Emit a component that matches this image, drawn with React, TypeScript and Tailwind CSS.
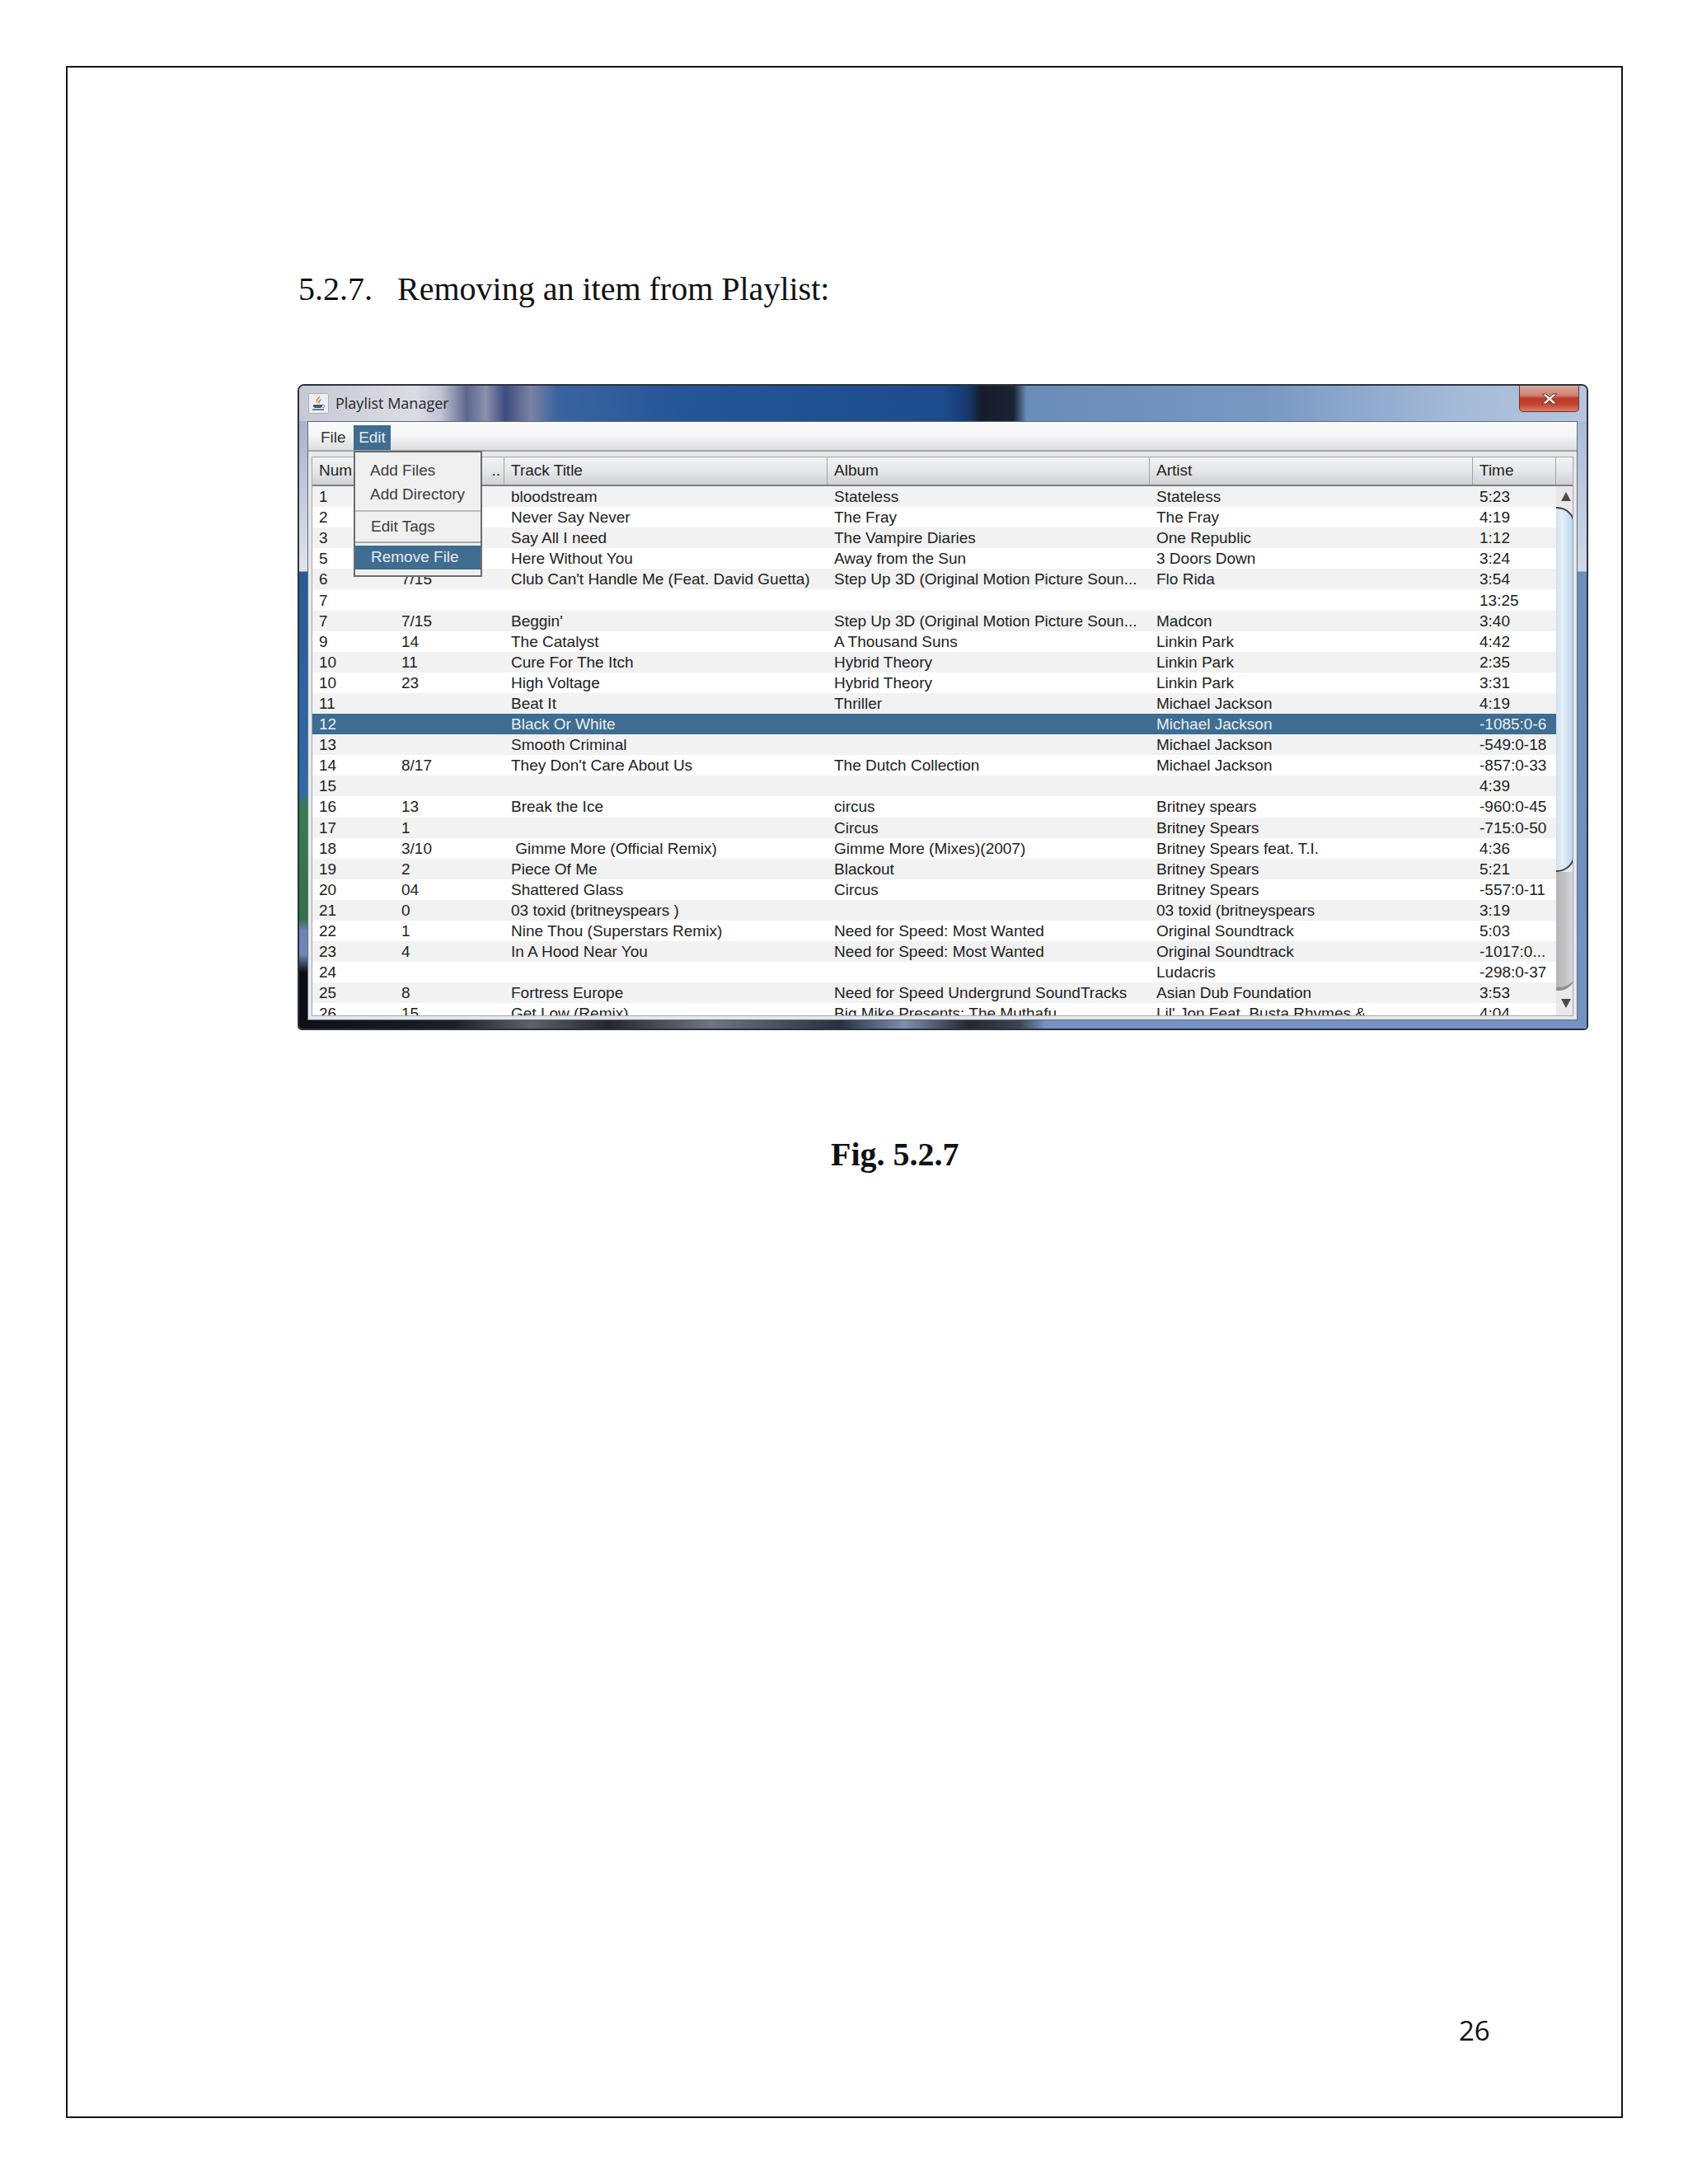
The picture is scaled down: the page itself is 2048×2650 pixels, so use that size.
type Row = [string, string, string, string, string, string]

const rows: Row[] = [
    ['1', '', 'bloodstream', 'Stateless', 'Stateless', '5:23'],
    ['2', '', 'Never Say Never', 'The Fray', 'The Fray', '4:19'],
    ['3', '', 'Say All I need', 'The Vampire Diaries', 'One Republic', '1:12'],
    ['5', '', 'Here Without You', 'Away from the Sun', '3 Doors Down', '3:24'],
    ['6', '7/15', "Club Can't Handle Me (Feat. David Guetta)", 'Step Up 3D (Original Motion Picture Soun...', 'Flo Rida', '3:54'],
    ['7', '', '', '', '', '13:25'],
    ['7', '7/15', "Beggin'", 'Step Up 3D (Original Motion Picture Soun...', 'Madcon', '3:40'],
    ['9', '14', 'The Catalyst', 'A Thousand Suns', 'Linkin Park', '4:42'],
    ['10', '11', 'Cure For The Itch', 'Hybrid Theory', 'Linkin Park', '2:35'],
    ['10', '23', 'High Voltage', 'Hybrid Theory', 'Linkin Park', '3:31'],
    ['11', '', 'Beat It', 'Thriller', 'Michael Jackson', '4:19'],
    ['12', '', 'Black Or White', '', 'Michael Jackson', '-1085:0-6'],
    ['13', '', 'Smooth Criminal', '', 'Michael Jackson', '-549:0-18'],
    ['14', '8/17', "They Don't Care About Us", 'The Dutch Collection', 'Michael Jackson', '-857:0-33'],
    ['15', '', '', '', '', '4:39'],
    ['16', '13', 'Break the Ice', 'circus', 'Britney spears', '-960:0-45'],
    ['17', '1', '', 'Circus', 'Britney Spears', '-715:0-50'],
    ['18', '3/10', ' Gimme More (Official Remix)', 'Gimme More (Mixes)(2007)', 'Britney Spears feat. T.I.', '4:36'],
    ['19', '2', 'Piece Of Me', 'Blackout', 'Britney Spears', '5:21'],
    ['20', '04', 'Shattered Glass', 'Circus', 'Britney Spears', '-557:0-11'],
    ['21', '0', '03 toxid (britneyspears )', '', '03 toxid (britneyspears', '3:19'],
    ['22', '1', 'Nine Thou (Superstars Remix)', 'Need for Speed: Most Wanted', 'Original Soundtrack', '5:03'],
    ['23', '4', 'In A Hood Near You', 'Need for Speed: Most Wanted', 'Original Soundtrack', '-1017:0...'],
    ['24', '', '', '', 'Ludacris', '-298:0-37'],
    ['25', '8', 'Fortress Europe', 'Need for Speed Undergrund SoundTracks', 'Asian Dub Foundation', '3:53'],
    ['26', '15', 'Get Low (Remix)', 'Big Mike Presents: The Muthafu...', "Lil' Jon Feat. Busta Rhymes &", '4:04'],
]

const columns = 'grid grid-cols-[100px_133px_392px_391px_392px_101px]'

function JavaIcon() {
    return (
        <svg width="25" height="25" viewBox="0 0 25 25" className="shrink-0">
            <rect x="0.5" y="0.5" width="24" height="24" rx="2" fill="#eceef2" stroke="#a9aebb" />
            <path d="M14 3c1 3-4 5-3 8 .4 1.2 1 2 1 2-2-1-3-3-2-5s3-3 4-5z" fill="#e2701c" />
            <path d="M16 7c0 2-3 3-2.500 5 .2.6.5 1 .5 1-1.500-.6-2-2-1.500-3s2.500-2 3.500-3z" fill="#d9421a" />
            <path d="M6 14h11v1.500c0 1.500-1 2.500-2.500 2.500h-6C7 18 6 17 6 15.500z" fill="#46586f" />
            <path d="M17 14.500c2-.5 3 .3 3 1.200s-1.500 1.800-3 2" fill="none" stroke="#5b7fa8" strokeWidth="1" />
            <path d="M5 20h14" stroke="#46586f" strokeWidth="1.500" />
        </svg>
    )
}

function CloseButton() {
    return (
        <div className="flex h-[32px] w-[73px] items-center justify-center rounded-b-[5px] border border-t-0 border-[#5e3a3a] bg-[linear-gradient(180deg,#d9a79c_0%,#cf8272_38%,#bf3a28_50%,#c33f2c_70%,#dc7a66_100%)]">
            <svg width="26" height="16" viewBox="0 0 26 16">
                <path d="M4 2h5l4 4 4-4h5l-6.500 6L22 14h-5l-4-4-4 4H4l6.500-6z" fill="#f1f1f1" stroke="#5c3030" strokeWidth="1" />
            </svg>
        </div>
    )
}

function PopupMenu() {
    return (
        <div className="absolute left-[55px] top-[35px] flex h-[153px] w-[156px] flex-col border-2 border-[#6c6c6c] bg-[#f0f0f0] text-[19px] text-[#3d3d3d]">
            <div className="mt-[8px] flex h-[29px] items-center pl-[18px]">Add Files</div>
            <div className="flex h-[29px] items-center pl-[18px]">Add Directory</div>
            <div className="mt-[4px] h-[2px] bg-[#bcbcbc]" />
            <div className="flex h-[36px] items-center pl-[19px]">Edit Tags</div>
            <div className="h-[2px] bg-[#a8a8a8]" />
            <div className="mt-[3px] flex h-[29px] items-center bg-[#3e6d91] pl-[19px] text-[#e4ecf2]">Remove File</div>
        </div>
    )
}

function Triangle({ down }: { down?: boolean }) {
    return (
        <svg width="12" height="11" viewBox="0 0 12 11">
            <polygon points={down ? '0,0 12,0 6,11' : '6,0 12,11 0,11'} fill="#4a4a4a" />
        </svg>
    )
}

function Scrollbar() {
    return (
        <div className="flex w-[23px] shrink-0 flex-col bg-[#e9e9e9]">
            <div className="flex h-[25px] items-center justify-center"><Triangle /></div>
            <div className="h-[443px] rounded-tr-[22px] rounded-br-[22px] border-y-2 border-r-2 border-[#33404c] bg-[linear-gradient(90deg,#cfe1ef_0%,#e4eff7_35%,#b9d3ea_100%)]" />
            <div className="h-[144px] rounded-br-[20px] border-b-4 border-[#8f8f92] bg-[linear-gradient(90deg,#b4b4b8_0%,#c4c4c8_50%,#e0e0e2_100%)]" />
            <div className="flex flex-1 items-center justify-center"><Triangle down /></div>
        </div>
    )
}

function HeaderCell({ children }: { children?: string }) {
    return <div className="flex items-center border-r border-[#a0a3a8] pl-[8px]">{children}</div>
}

function PlaylistTable() {
    return (
        <div className="mx-[4px] flex h-[679px] flex-col overflow-hidden border border-[#a4a7ab] bg-white text-[19px] text-[#222]">
            <div className={`${columns} h-[35px] w-full shrink-0 border-b-2 border-[#7c8086] bg-[linear-gradient(180deg,#f2f2f3_0%,#e6e7e9_50%,#cfd1d5_100%)]`}>
                <HeaderCell>Num</HeaderCell>
                <div className="flex items-center justify-end border-r border-[#a0a3a8] pr-[4px]">..</div>
                <HeaderCell>Track Title</HeaderCell>
                <HeaderCell>Album</HeaderCell>
                <HeaderCell>Artist</HeaderCell>
                <HeaderCell>Time</HeaderCell>
            </div>
            <div className="flex min-h-0 flex-1 overflow-hidden">
                <div className="w-[1509px] shrink-0 overflow-hidden">
                    {rows.map((row, i) => {
                        const selected = row[0] === '12'
                        const bg = selected ? 'bg-[#3e6d91] text-[#e8eef3]' : i % 2 === 0 ? 'bg-[#f2f2f2]' : 'bg-white'
                        return (
                            <div key={i} className={`${columns} h-[25.1px] items-center ${bg}`}>
                                {row.map((cell, j) => (
                                    <div key={j} className="overflow-hidden whitespace-pre pl-[8px] leading-[25px]">{cell}</div>
                                ))}
                            </div>
                        )
                    })}
                </div>
                <Scrollbar />
            </div>
        </div>
    )
}

function PlaylistWindow() {
    return (
        <div className="flex h-[784px] w-[1566px] flex-col overflow-hidden rounded-t-[8px] rounded-b-[5px] border-2 border-[#2c333c] font-['Liberation_Sans',sans-serif]">
            <div className="flex h-[43px] shrink-0 items-start justify-between bg-[linear-gradient(90deg,#c6c8d4_0%,#dcdce4_9%,#c2c4d2_11%,#5c6790_13%,#8b90ac_14.500%,#3d4c80_16%,#7c82a2_18%,#3a64a0_20%,#245596_30%,#1c4c8c_50%,#17386c_52%,#161c2a_53%,#1a2434_55.500%,#6a8cb8_56.500%,#7898c2_75%,#a5bad8_90%,#b6c6de_100%)] pr-[9px]">
                <div className="flex items-center gap-[8px] pl-[11px] pt-[9px]">
                    <JavaIcon />
                    <span className="-translate-y-[1px] font-['Open_Sans',sans-serif] text-[18px] leading-[24px] text-[#24262c]">Playlist Manager</span>
                </div>
                <CloseButton />
            </div>
            <div className="flex min-h-0 flex-1">
                <div className="w-[10px] shrink-0 bg-[linear-gradient(180deg,#aab2ca_0%,#dfe3ec_25%,#2a5a96_25.200%,#2f6aa8_62%,#3a7a52_64%,#357048_83%,#6a84b0_85%,#6f88b2_89%,#0a0e14_92%,#0a0e14_100%)]" />
                <div className="relative flex min-w-0 flex-1 flex-col border border-[#5a6e85] bg-[#e8e8e8]">
                    <div className="flex h-[36px] shrink-0 items-start border-b-2 border-[#a3a5a8] bg-[linear-gradient(180deg,#fbfbfb_0%,#f6f6f6_45%,#dcdde0_100%)] pl-[15px] pt-[4px] text-[19px] text-[#333]">
                        <span className="flex h-[30px] w-[40px] items-center">File</span>
                        <span className="flex h-[30px] w-[45px] items-center justify-center bg-[#3e6d91] text-[#e8eef3]">Edit</span>
                    </div>
                    <div className="h-[6px] shrink-0" />
                    <PlaylistTable />
                    <PopupMenu />
                </div>
                <div className="w-[11px] shrink-0 bg-[linear-gradient(180deg,#a9bcd6_0%,#d0d9e6_25%,#6d8dbd_25.200%,#7392c0_100%)]" />
            </div>
            <div className="h-[10px] shrink-0 bg-[linear-gradient(90deg,#0d1016_0%,#1b1f27_12%,#5d6168_18%,#23262d_24%,#6f7480_32%,#26303f_42%,#7f8eb0_47%,#22272f_52%,#3f4552_56%,#7494c4_58%,#7494c4_100%)]" />
        </div>
    )
}

export default function App() {
    return (
        <div className="h-[2650px] w-[2048px] bg-white pl-[80px] pt-[80px]">
            <div className="flex h-[2490px] w-[1889px] flex-col border-2 border-[#161616] pl-[280px]">
                <div className="mt-[246px] flex font-['Liberation_Serif',serif] text-[40px] leading-[46px] text-[#111]">
                    <span className="w-[120px]">5.2.7.</span>
                    <span>Removing an item from Playlist:</span>
                </div>
                <div className="-ml-[1px] mt-[92px]">
                    <PlaylistWindow />
                </div>
                <div className="ml-[646px] mt-[128px] font-['Liberation_Serif',serif] text-[40px] font-bold leading-[46px] text-[#111]">Fig. 5.2.7</div>
                <div className="ml-[1408px] mt-[1017px] font-['Open_Sans',sans-serif] text-[33px] leading-[46px] text-[#111]">26</div>
            </div>
        </div>
    )
}
